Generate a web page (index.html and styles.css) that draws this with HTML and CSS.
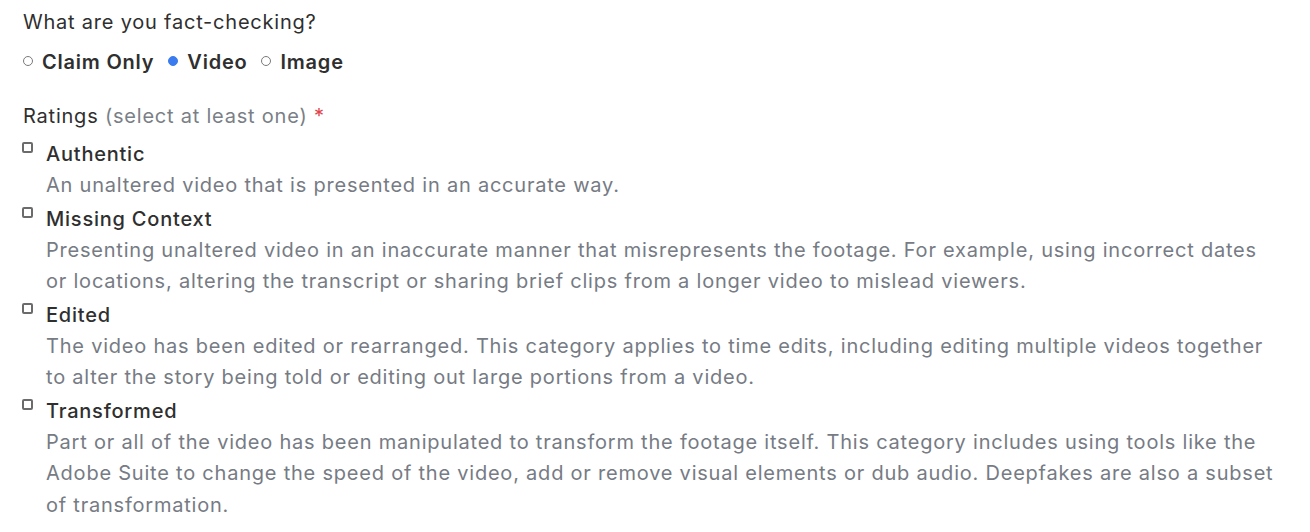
FILE: index.html
```html
<!DOCTYPE html>
<html lang="en">
<head>
  <meta charset="UTF-8">
  <title>Fact-check form</title>
  <link rel="stylesheet" href="styles.css">
</head>
<body>

  <form class="fc-form">
    <!-- What kind of thing is being checked -->
    <div class="field">
      <div class="field-label">What are you fact-checking?</div>
      <div class="radio-row">
        <label class="radio"><span class="dot"></span>Claim Only</label>
        <label class="radio"><span class="dot checked"></span>Video</label>
        <label class="radio"><span class="dot"></span>Image</label>
      </div>
    </div>

    <!-- Ratings -->
    <div class="field ratings">
      <div class="field-label">Ratings <span class="hint">(select at least one)</span> <span class="req">*</span></div>

      <div class="rating-list">
        <div class="rating">
          <span class="box"></span>
          <div class="rating-text">
            <div class="rating-title">Authentic</div>
            <div class="rating-desc">An unaltered video that is presented in an accurate way.</div>
          </div>
        </div>

        <div class="rating">
          <span class="box"></span>
          <div class="rating-text">
            <div class="rating-title">Missing Context</div>
            <div class="rating-desc">Presenting unaltered video in an inaccurate manner that misrepresents the footage. For example, using incorrect dates or locations, altering the transcript or sharing brief clips from a longer video to mislead viewers.</div>
          </div>
        </div>

        <div class="rating">
          <span class="box"></span>
          <div class="rating-text">
            <div class="rating-title">Edited</div>
            <div class="rating-desc">The video has been edited or rearranged. This category applies to time edits, including editing multiple videos together to alter the story being told or editing out large portions from a video.</div>
          </div>
        </div>

        <div class="rating">
          <span class="box"></span>
          <div class="rating-text">
            <div class="rating-title">Transformed</div>
            <div class="rating-desc">Part or all of the video has been manipulated to transform the footage itself. This category includes using tools like the Adobe Suite to change the speed of the video, add or remove visual elements or dub audio. Deepfakes are also a subset of transformation.</div>
          </div>
        </div>
      </div>
    </div>
  </form>

</body>
</html>
```

FILE: styles.css
```css
body {
  font-family: Inter, "Noto Sans", sans-serif;
  font-size: 20px;
  letter-spacing: 0.78px;
  color: #2f2f2f;
  margin: 0;
  padding: 6px 30px 0 23px;
  background: #fff;
}

.field-label {
  line-height: 32px;
}

.radio-row {
  display: flex;
  gap: 14px;
  margin-top: 8px;
  font-weight: 600;
  line-height: 32px;
}

.radio {
  display: flex;
  align-items: center;
}

.dot {
  box-sizing: border-box;
  width: 10px;
  height: 10px;
  border: 1.5px solid #7a7a7a;
  border-radius: 50%;
  margin: 0 9px 3px 0;
}

.dot.checked {
  background: #3b7bf0;
  border-color: #3b7bf0;
}

.ratings {
  margin-top: 22px;
}

.hint {
  color: #7a7f87;
}

.req {
  color: #e0434b;
}

.rating-list {
  display: flex;
  flex-direction: column;
  gap: 2px;
  margin-top: 7px;
}

.rating {
  display: flex;
}

.box {
  flex: none;
  box-sizing: border-box;
  width: 11px;
  height: 11px;
  border: 2px solid #6b6b6b;
  border-radius: 2px;
  margin: 3px 13px 0 -1px;
}

.rating-title {
  font-weight: 500;
  line-height: 31px;
}

.rating-desc {
  color: #767b84;
  line-height: 31.5px;
}
```
